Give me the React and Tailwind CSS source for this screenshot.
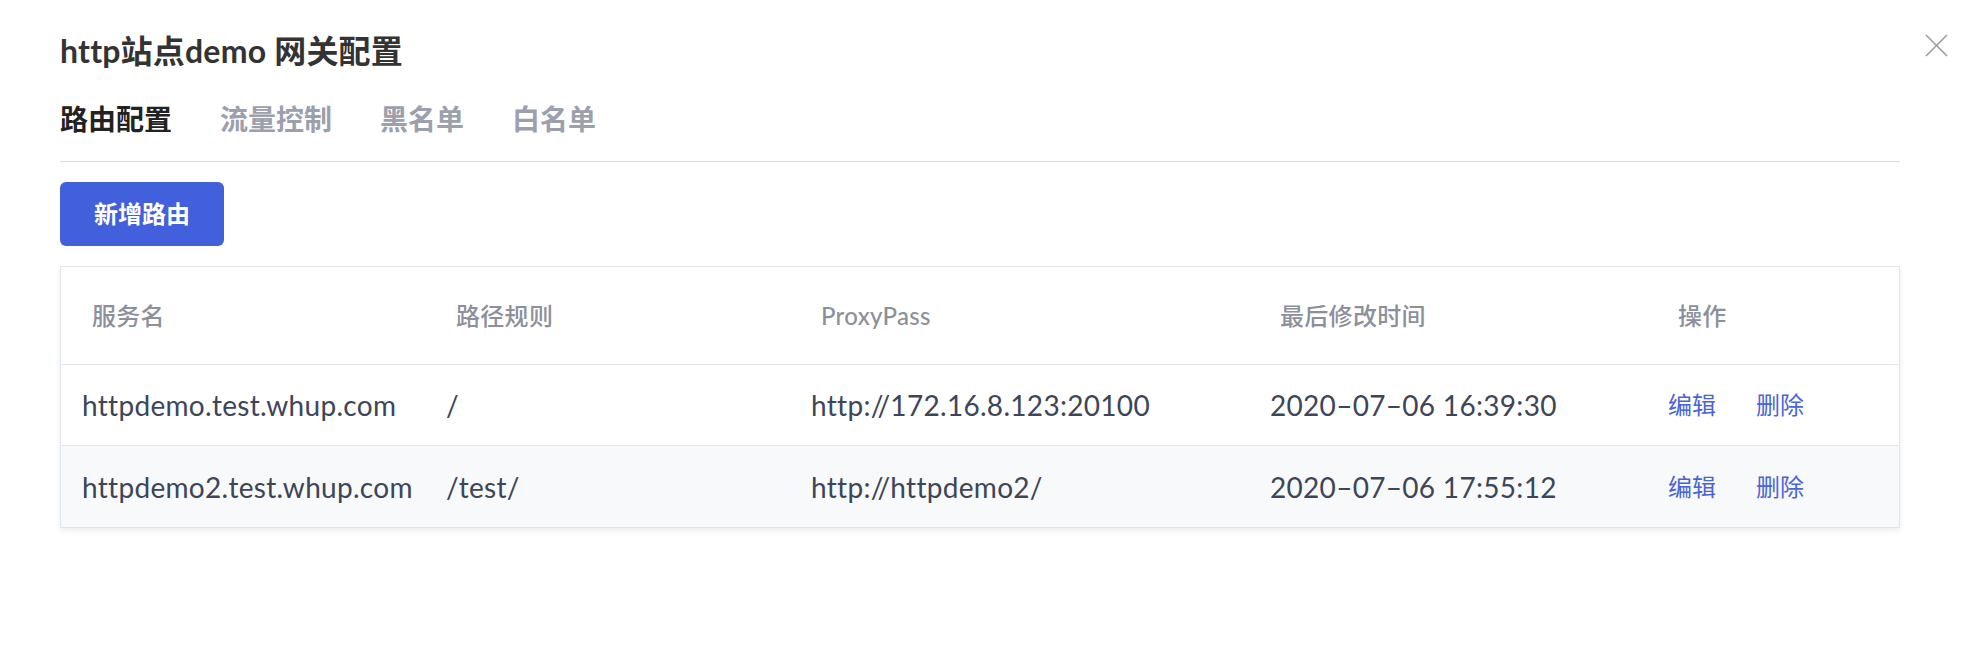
import React from 'react';

const FONT = "font-['Lato','Noto_Sans_CJK_SC',sans-serif]";

const tabs = ['路由配置', '流量控制', '黑名单', '白名单'];

const columns = ['服务名', '路径规则', 'ProxyPass', '最后修改时间', '操作'];

const routes = [
  { host: 'httpdemo.test.whup.com', path: '/', proxy: 'http://172.16.8.123:20100', updated: '2020–07–06 16:39:30' },
  { host: 'httpdemo2.test.whup.com', path: '/test/', proxy: 'http://httpdemo2/', updated: '2020–07–06 17:55:12' },
];

const GRID = 'grid grid-cols-[364px_365px_459px_398px_1fr]';

export default function App() {
  return (
    <div className={`relative w-full h-[670px] bg-white pl-[60px] pr-[88px] ${FONT}`}>
      {/* close button */}
      <button className="absolute top-[34px] left-[1925px] w-[23px] h-[23px] text-[#9b9b9b]">
        <svg viewBox="0 0 23 23" className="w-full h-full" fill="none" stroke="currentColor" strokeWidth="1.6">
          <line x1="1" y1="1" x2="22" y2="22" />
          <line x1="22" y1="1" x2="1" y2="22" />
        </svg>
      </button>

      <h1 className="pt-[27px] text-[32px] leading-[48px] font-bold text-[#333333] tracking-[0.2px]">http站点demo 网关配置</h1>

      {/* tabs */}
      <div className="mt-[24px] flex gap-[48px] pb-[22px] border-b border-[#d6dae1]">
        {tabs.map((t, i) => (
          <span
            key={t}
            className={`text-[28px] leading-[40px] ${i === 0 ? 'font-bold text-[#222222]' : 'font-semibold text-[#9ba0ac]'}`}
          >
            {t}
          </span>
        ))}
      </div>

      <button className="mt-[20px] w-[164px] h-[64px] rounded-md bg-[#4260dc] text-white text-[24px] font-semibold">
        新增路由
      </button>

      {/* routes table */}
      <div className="mt-[20px] border border-[#e0e4eb] shadow-[0_3px_6px_rgba(0,0,0,0.07)]">
        <div className={`${GRID} h-[98px] items-center border-b border-[#e0e4eb]`}>
          {columns.map((c) => (
            <div key={c} className="pl-[31px] text-[24px] font-medium text-[#8c909b] tracking-[0.3px]">{c}</div>
          ))}
        </div>
        {routes.map((r, i) => (
          <div
            key={r.host}
            className={`${GRID} h-[81px] items-center text-[28px] tracking-[0.3px] text-[#3d4558] ${i === 0 ? 'border-b border-[#e0e4eb] bg-white' : 'bg-[#f8f9fb]'}`}
          >
            <div className="pl-[21px]">{r.host}</div>
            <div className="pl-[21px]">{r.path}</div>
            <div className="pl-[21px]">{r.proxy}</div>
            <div className="pl-[21px]">{r.updated}</div>
            <div className="pl-[21px] flex gap-[40px] text-[24px] tracking-normal text-[#4a63d9]">
              <a className="cursor-pointer">编辑</a>
              <a className="cursor-pointer">删除</a>
            </div>
          </div>
        ))}
      </div>
    </div>
  );
}
